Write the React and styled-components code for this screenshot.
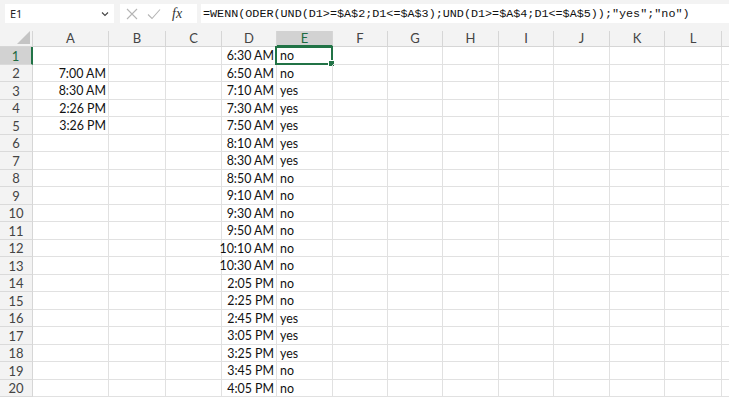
import styled, { createGlobalStyle } from "styled-components";

const GlobalStyle = createGlobalStyle`
  html, body {
    margin: 0;
    padding: 0;
    background: #ffffff;
    overflow: hidden;
  }
`;

const COLS = [
  { name: "A", w: 76 },
  { name: "B", w: 57 },
  { name: "C", w: 56 },
  { name: "D", w: 55 },
  { name: "E", w: 56 },
  { name: "F", w: 55 },
  { name: "G", w: 55 },
  { name: "H", w: 56 },
  { name: "I", w: 55 },
  { name: "J", w: 56 },
  { name: "K", w: 55 },
  { name: "L", w: 57 },
  { name: "", w: 55 },
];

const colA = ["", "7:00 AM", "8:30 AM", "2:26 PM", "3:26 PM"];

const times = [
  "6:30 AM", "6:50 AM", "7:10 AM", "7:30 AM", "7:50 AM", "8:10 AM", "8:30 AM",
  "8:50 AM", "9:10 AM", "9:30 AM", "9:50 AM", "10:10 AM", "10:30 AM", "2:05 PM",
  "2:25 PM", "2:45 PM", "3:05 PM", "3:25 PM", "3:45 PM", "4:05 PM",
];

const results = [
  "no", "no", "yes", "yes", "yes", "yes", "yes", "no", "no", "no", "no", "no",
  "no", "no", "no", "yes", "yes", "yes", "no", "no",
];

const FORMULA = '=WENN(ODER(UND(D1>=$A$2;D1<=$A$3);UND(D1>=$A$4;D1<=$A$5));"yes";"no")';

const template = `33px ${COLS.map((c) => c.w + "px").join(" ")}`;

const Page = styled.div`
  width: 729px;
  height: 398px;
  overflow: hidden;
  background: #ffffff;
  font-family: Lato, "Noto Sans", sans-serif;
`;

const FormulaBar = styled.div`
  height: 31px;
  box-sizing: border-box;
  background: #f3f3f3;
  display: flex;
  align-items: flex-start;
  padding: 4px 0 0 5px;
  gap: 6px;
`;

const NameBox = styled.div`
  width: 109px;
  height: 19px;
  background: #ffffff;
  display: flex;
  align-items: center;
  justify-content: space-between;
  padding: 0 5px 0 5px;
  box-sizing: border-box;
  font-family: "Noto Sans", sans-serif;
  font-size: 11px;
  color: #222;
`;

const ButtonBox = styled.div`
  width: 77px;
  height: 19px;
  background: #ffffff;
  display: flex;
  align-items: center;
  padding-left: 6px;
  gap: 9px;
  box-sizing: border-box;
`;

const Fx = styled.span`
  font-family: "Liberation Serif", serif;
  font-style: italic;
  font-size: 14px;
  color: #333;
  margin-left: 2px;
  line-height: 1;
`;

const FormulaInput = styled.div`
  flex: 1;
  height: 19px;
  margin-left: -2px;
  background: #ffffff;
  display: flex;
  align-items: center;
  padding-left: 2px;
  font-family: "Liberation Mono", monospace;
  font-size: 11.75px;
  color: #111;
  white-space: nowrap;
  overflow: hidden;
`;

const Grid = styled.div`
  display: grid;
  grid-template-columns: ${template};
  grid-template-rows: 16px repeat(20, 17.5px);
`;

const Corner = styled.div`
  background: #f3f3f3;
  border-right: 1px solid #d6d6d6;
  border-bottom: 1px solid #d6d6d6;
  box-sizing: border-box;
  position: relative;
`;

const ColHead = styled.div`
  background: ${(p) => (p.$active ? "#d2d2d2" : "#f3f3f3")};
  color: ${(p) => (p.$active ? "#1e6b41" : "#444")};
  border-right: 1px solid #d6d6d6;
  border-bottom: ${(p) => (p.$active ? "2px solid #217346" : "1px solid #d6d6d6")};
  box-sizing: border-box;
  font-size: 13px;
  display: flex;
  align-items: center;
  justify-content: center;
  line-height: 1;
`;

const RowHead = styled.div`
  background: ${(p) => (p.$active ? "#d2d2d2" : "#f3f3f3")};
  color: ${(p) => (p.$active ? "#1e6b41" : "#444")};
  border-right: ${(p) => (p.$active ? "2px solid #217346" : "1px solid #d6d6d6")};
  border-bottom: 1px solid #dadada;
  box-sizing: border-box;
  font-size: 13px;
  display: flex;
  align-items: center;
  justify-content: center;
  padding-top: 1px;
`;

const Cell = styled.div`
  border-right: 1px solid #e1e1e1;
  border-bottom: 1px solid #e1e1e1;
  box-sizing: border-box;
  font-size: 12.4px;
  color: #111;
  display: flex;
  align-items: flex-end;
  justify-content: ${(p) => (p.$right ? "flex-end" : "flex-start")};
  padding: 0 2px 0 3px;
  white-space: nowrap;
  position: relative;
  line-height: 14.5px;
`;

const Selection = styled.div`
  position: absolute;
  left: -2px;
  top: -1px;
  right: -1px;
  bottom: -1px;
  border: 2px solid #217346;
  pointer-events: none;
`;

const Handle = styled.div`
  position: absolute;
  right: -4px;
  bottom: -4px;
  width: 5px;
  height: 5px;
  background: #217346;
  border: 1px solid #ffffff;
`;

const Chevron = () => (
  <svg width="8" height="6" viewBox="0 0 8 6">
    <path d="M1 1.5 L4 4.5 L7 1.5" fill="none" stroke="#444" strokeWidth="1.1" />
  </svg>
);

const CrossIcon = () => (
  <svg width="12" height="12" viewBox="0 0 12 12">
    <path d="M1 1 L11 11 M11 1 L1 11" stroke="#b5b5b5" strokeWidth="1.1" fill="none" />
  </svg>
);

const CheckIcon = () => (
  <svg width="14" height="12" viewBox="0 0 14 12">
    <path d="M1 6.5 L5 10.5 L13 1.5" stroke="#b5b5b5" strokeWidth="1.1" fill="none" />
  </svg>
);

const CornerTriangle = () => (
  <svg
    width="13"
    height="13"
    viewBox="0 0 13 13"
    style={{ position: "absolute", right: 2, bottom: 2 }}
  >
    <path d="M13 0 L13 13 L0 13 Z" fill="#c4c4c4" />
  </svg>
);

const cellContent = (col, r) => {
  if (col === "A") return colA[r] || "";
  if (col === "D") return times[r];
  if (col === "E") return results[r];
  return "";
};

export default function App() {
  const rows = Array.from({ length: 20 }, (_, i) => i);
  return (
    <Page>
      <GlobalStyle />
      <FormulaBar>
        <NameBox>
          <span>E1</span>
          <Chevron />
        </NameBox>
        <ButtonBox>
          <CrossIcon />
          <CheckIcon />
          <Fx>fx</Fx>
        </ButtonBox>
        <FormulaInput>{FORMULA}</FormulaInput>
      </FormulaBar>
      <Grid>
        <Corner>
          <CornerTriangle />
        </Corner>
        {COLS.map((c, i) => (
          <ColHead key={"c" + i} $active={c.name === "E"}>
            {c.name}
          </ColHead>
        ))}
        {rows.map((r) => [
          <RowHead key={"h" + r} $active={r === 0}>
            {r + 1}
          </RowHead>,
          ...COLS.map((c, i) => (
            <Cell key={"c" + i + "-" + r} $right={c.name === "A" || c.name === "D"}>
              {cellContent(c.name, r)}
              {c.name === "E" && r === 0 && (
                <Selection>
                  <Handle />
                </Selection>
              )}
            </Cell>
          )),
        ])}
      </Grid>
    </Page>
  );
}
